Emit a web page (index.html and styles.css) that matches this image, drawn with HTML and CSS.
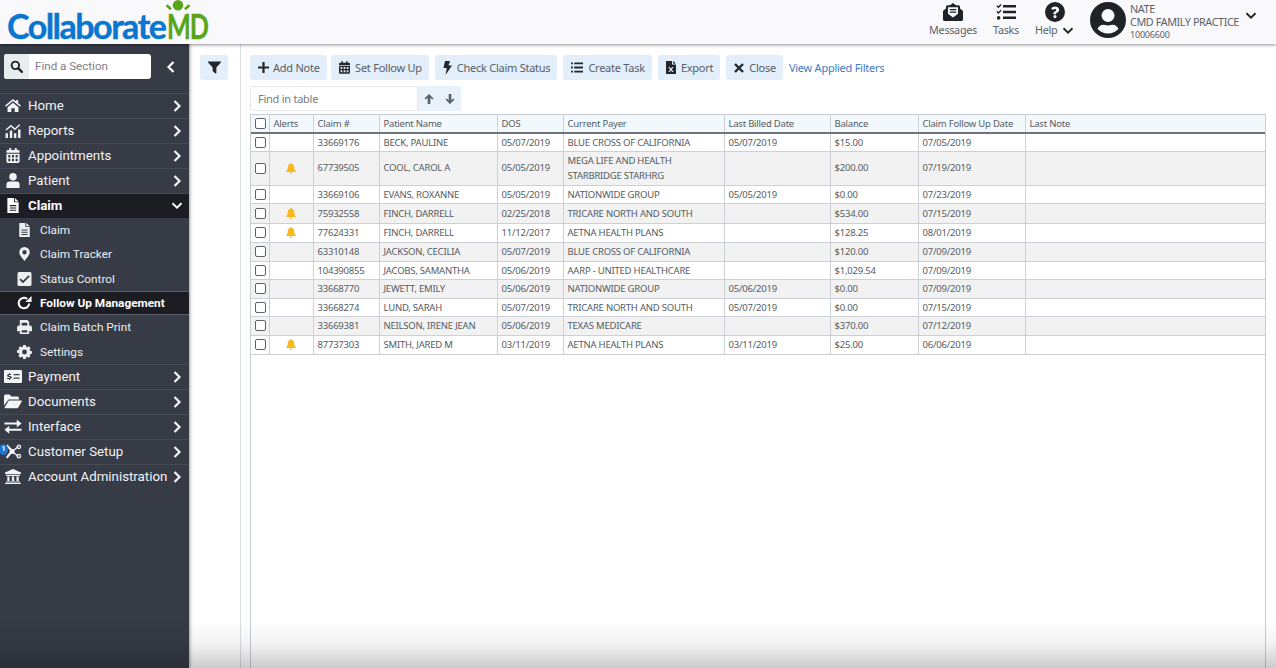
FILE: index.html
```html
<!DOCTYPE html>
<html lang="en">
<head>
<meta charset="utf-8">
<title>CollaborateMD</title>
<link rel="stylesheet" href="styles.css">
</head>
<body>
<svg class="sprite" width="0" height="0" aria-hidden="true">
  <defs>
    <symbol id="i-search" viewBox="0 0 16 16"><circle cx="6.6" cy="6.6" r="4.6" fill="none" stroke="currentColor" stroke-width="2.3"/><path d="M10 10l4.6 4.6" stroke="currentColor" stroke-width="2.8" stroke-linecap="round"/></symbol>
    <symbol id="i-right" viewBox="0 0 12 16"><path d="M3 2l6 6-6 6" fill="none" stroke="currentColor" stroke-width="2.6"/></symbol>
    <symbol id="i-left" viewBox="0 0 12 16"><path d="M9 2L3 8l6 6" fill="none" stroke="currentColor" stroke-width="2.6"/></symbol>
    <symbol id="i-down" viewBox="0 0 16 12"><path d="M2 3l6 6 6-6" fill="none" stroke="currentColor" stroke-width="2.4"/></symbol>
    <symbol id="i-home" viewBox="0 0 18 16"><path d="M9 1L0.5 8l1 1.3L9 3.2l7.5 6.1 1-1.3-3-2.5V2h-2v1.6z"/><path d="M3.2 9.8L9 5l5.8 4.8V15h-4v-4H7.2v4h-4z"/></symbol>
    <symbol id="i-chart" viewBox="0 0 18 16"><path d="M1 11h2.6v5H1zM5.6 8h2.6v8H5.6zM10 11h2.6v5H10zM14.4 7H17v9h-2.6z"/><path d="M1.5 7.5L6.8 2.8l4.2 4 5.2-5" fill="none" stroke="currentColor" stroke-width="1.5"/></symbol>
    <symbol id="i-calendar" viewBox="0 0 14 16"><path d="M3 0h2v2h4V0h2v2h1.5A1.5 1.5 0 0 1 14 3.5V5H0V3.500A1.500 1.500 0 0 1 1.500 2H3z"/><path fill-rule="evenodd" d="M0 6h14v8.500a1.500 1.500 0 0 1-1.500 1.500h-11A1.500 1.500 0 0 1 0 14.500zM2 7.500V10h2.200V7.500zM5.900 7.500V10h2.200V7.500zM9.800 7.500V10H12V7.500zM2 11.500V14h2.200v-2.500zM5.900 11.500V14h2.200v-2.500zM9.800 11.500V14H12v-2.500z"/></symbol>
    <symbol id="i-user" viewBox="0 0 14 16"><circle cx="7" cy="4" r="4"/><path d="M3.500 9h7A3.500 3.500 0 0 1 14 12.500V16H0v-3.500A3.500 3.500 0 0 1 3.500 9z"/></symbol>
    <symbol id="i-file" viewBox="0 0 12 16"><path fill-rule="evenodd" d="M0 0h7v4.500h5V16H0zM2.500 7.500v1.200h7V7.500zM2.500 10v1.200h7V10zM2.500 12.500v1.200h7v-1.200z"/><path d="M8 0l4 3.600H8z"/></symbol>
    <symbol id="i-pin" viewBox="0 0 12 16"><path fill-rule="evenodd" d="M6 0a6 6 0 0 1 6 6c0 3-3.500 7-6 10C3.500 13 0 9 0 6a6 6 0 0 1 6-6zm0 3.500a2.500 2.500 0 1 0 0 5 2.500 2.500 0 0 0 0-5z"/></symbol>
    <symbol id="i-check" viewBox="0 0 14 14"><path fill-rule="evenodd" d="M1.500 0h11A1.500 1.500 0 0 1 14 1.500v11a1.500 1.500 0 0 1-1.500 1.500h-11A1.500 1.500 0 0 1 0 12.500v-11A1.500 1.500 0 0 1 1.500 0zM11 3.200L5.500 8.700 3.200 6.400 1.900 7.700l3.600 3.600 6.800-6.800z"/></symbol>
    <symbol id="i-redo" viewBox="0 0 16 16"><path d="M13 8.500A5.600 5.600 0 1 1 10.800 3.600" fill="none" stroke="currentColor" stroke-width="2.200"/><path d="M15.500 0.500v6.500H9z"/></symbol>
    <symbol id="i-print" viewBox="0 0 16 15"><path fill-rule="evenodd" d="M3 0h8l2 2v4.500h-2V3H5v3.500H3z"/><path fill-rule="evenodd" d="M2 6h12a2 2 0 0 1 2 2v4h-3v3H3v-3H0V8a2 2 0 0 1 2-2zm3 5v2.500h6V11z"/></symbol>
    <symbol id="i-cog" viewBox="0 0 16 16"><path fill-rule="evenodd" d="M6.500 0h3l.4 2.100 1.300.6L13 1.500l2 2.200-1.200 1.700.5 1.300 2.200.4v3l-2.200.4-.5 1.300L15 12.300l-2 2.200-1.800-1.200-1.300.6L9.500 16h-3l-.4-2.100-1.300-.6L3 14.500l-2-2.200 1.200-1.700-.5-1.300L-.5 8.900v-3l2.200-.4.500-1.300L1 3.700l2-2.200 1.800 1.200 1.300-.6zM8 5.200a2.800 2.800 0 1 0 0 5.600 2.800 2.800 0 0 0 0-5.600z"/></symbol>
    <symbol id="i-money" viewBox="0 0 18 13"><path fill-rule="evenodd" d="M1 0h16a1 1 0 0 1 1 1v11a1 1 0 0 1-1 1H1a1 1 0 0 1-1-1V1a1 1 0 0 1 1-1zm8.500 4v1.300h6V4zm0 3.500v1.300h6V7.500zM5 3v1c-2.400.3-2.400 2.700-.3 3l1 .2c.7.200.5.800-.2.800H3v1h2v1h1V9c2.300-.3 2.300-2.600.3-2.900l-1-.2c-.7-.2-.5-.9.200-.9H7V4H6V3z"/></symbol>
    <symbol id="i-folder" viewBox="0 0 18 14"><path d="M0 1.500A1.500 1.500 0 0 1 1.500 0h4l2 2h6A1.500 1.500 0 0 1 15 3.500V5H4.500L0 11z"/><path d="M4.800 6H17.500c.4 0 .6.400.4.700L14.300 13a1.500 1.500 0 0 1-1.200.7H1c-.4 0-.6-.4-.4-.7z"/></symbol>
    <symbol id="i-exchange" viewBox="0 0 16 14"><path d="M0 3.300h11.500V0.500L16 4.300l-4.500 3.600V5.200H0zM16 9H4.500V6.400L0 10l4.500 3.700v-2.800H16z"/></symbol>
    <symbol id="i-setup" viewBox="0 0 20 16"><path d="M3 1l6 6.200L3 15" fill="none" stroke="currentColor" stroke-width="2.400"/><path d="M9 8l7-5.500M9 8l7 5.500" stroke="currentColor" stroke-width="1.500"/><circle cx="9" cy="8" r="2.800"/><circle cx="16.500" cy="2.800" r="1.900" fill="none" stroke="currentColor" stroke-width="1.400"/><circle cx="16.500" cy="13.200" r="1.900" fill="none" stroke="currentColor" stroke-width="1.400"/></symbol>
    <symbol id="i-bank" viewBox="0 0 16 15"><path d="M8 0l8 3.400V5H0V3.400zM1 5.800h14V7H1zM2.300 7.600h2.200v4.400H2.300zM6.900 7.600h2.200v4.400H6.900zM11.500 7.600h2.200v4.400h-2.200zM1 12.500h14v1.100H1zM0 14h16v1H0z"/></symbol>
    <symbol id="i-filter" viewBox="0 0 14 14"><path d="M0.500 0.500h13a.6.600 0 0 1 .4 1L9 7v6a.6.600 0 0 1-1 .4L5.200 11a.6.600 0 0 1-.2-.4V7L0.100 1.500a.6.600 0 0 1 .4-1z"/></symbol>
    <symbol id="i-plus" viewBox="0 0 12 12"><path d="M4.800 0h2.400v4.800H12v2.400H7.200V12H4.800V7.200H0V4.800h4.800z"/></symbol>
    <symbol id="i-bolt" viewBox="0 0 9 14"><path d="M2 0h5L5.500 4.500H9L2.500 14 3.800 7H0.500z"/></symbol>
    <symbol id="i-list" viewBox="0 0 13 11"><path d="M0 0h2v2H0zM3.500 0H13v2H3.500zM0 4.500h2v2H0zM3.500 4.500H13v2H3.500zM0 9h2v2H0zM3.500 9H13v2H3.500z"/></symbol>
    <symbol id="i-excel" viewBox="0 0 10 13"><path fill-rule="evenodd" d="M0 0h6v3.500h4V13H0zM2.300 6l1.800 2.600L2.300 11h1.400l1.200-1.700L6.100 11h1.500L5.800 8.500 7.500 6H6.100L5 7.700 3.800 6z"/><path d="M7 0l3 2.600H7z"/></symbol>
    <symbol id="i-times" viewBox="0 0 10 10"><path d="M1 1l8 8M9 1l-8 8" stroke="currentColor" stroke-width="2.400"/></symbol>
    <symbol id="i-up" viewBox="0 0 10 10"><path d="M5 0l4.500 4.500-1.200 1.100L6.300 3.800V10H3.700V3.800L1.700 5.600.5 4.500z"/></symbol>
    <symbol id="i-dn" viewBox="0 0 10 10"><path d="M5 10L.5 5.500l1.200-1.100 2 1.800V0h2.600v6.200l2-1.800 1.200 1.100z"/></symbol>
    <symbol id="i-bell" viewBox="0 0 10 11"><path d="M5 0a.9.900 0 0 1 .9.900C8 1.300 8.300 3 8.300 5c0 1.700.9 2.600 1.500 3.200.3.400.1.800-.4.800H.6c-.5 0-.7-.4-.4-.8C.8 7.600 1.700 6.700 1.700 5c0-2 .3-3.700 2.400-4.100A.9.900 0 0 1 5 0zM3.700 9.600h2.600a1.300 1.300 0 0 1-2.600 0z"/></symbol>
    <symbol id="i-mail" viewBox="0 0 20 18"><path fill-rule="evenodd" d="M10 0l3 2.300h2.500A1.500 1.500 0 0 1 17 3.800v1.600l2.300 1.800c.4.300.7.800.7 1.300v7.900a1.600 1.600 0 0 1-1.600 1.600H1.600A1.600 1.600 0 0 1 0 16.400V8.500c0-.5.300-1 .7-1.300L3 5.400V3.800a1.500 1.500 0 0 1 1.500-1.500H7zM5 4.300v6.400l5 3.700 5-3.700V4.300zM6.800 6h6.400v1.300H6.800zM6.800 8.500h6.400v1.300H6.800z"/></symbol>
    <symbol id="i-tasks" viewBox="0 0 20 17"><path d="M7 1.500h13V4H7zM7 7.300h13v2.500H7zM7 13.100h13v2.500H7z"/><path d="M.8 2.200l1.600 1.500L5 1M.8 8l1.600 1.500L5 6.800" fill="none" stroke="currentColor" stroke-width="1.400"/><circle cx="2.600" cy="14.400" r="1.800"/></symbol>
    <symbol id="i-help" viewBox="0 0 20 20"><path fill-rule="evenodd" d="M10 0a10 10 0 1 1 0 20 10 10 0 0 1 0-20zM6.200 6.800l2 1.300c.4-.8.900-1.200 1.700-1.200.7 0 1.300.4 1.300 1 0 .6-.5.900-1.200 1.300-.9.500-1.700 1.100-1.700 2.400v.6h2.800v-.3c0-.6.500-.9 1.200-1.300.9-.5 1.900-1.200 1.900-2.800C14.200 5.600 12 4.400 10 4.400c-1.800 0-3 .8-3.800 2.400zM10 13a1.600 1.600 0 1 0 0 3.200 1.600 1.600 0 0 0 0-3.200z"/></symbol>
    <symbol id="i-avatar" viewBox="0 0 36 36"><path fill-rule="evenodd" d="M18 0a18 18 0 1 1 0 36 18 18 0 0 1 0-36zm0 7a6.500 6.500 0 1 0 0 13 6.500 6.500 0 0 0 0-13zM18 31.500c4.200 0 8-1.800 10.500-4.800-1-2.300-3.200-4-5.800-4-.5 0-1 .1-1.500.3-1 .3-2 .5-3.200.5s-2.200-.2-3.200-.5c-.5-.2-1-.3-1.500-.3-2.600 0-4.800 1.700-5.800 4 2.500 3 6.300 4.800 10.500 4.800z"/></symbol>
  </defs>
</svg>

<header class="topbar">
  <div class="logo">
    <span class="logo-blue">Collaborate</span><span class="logo-green">MD</span>
    <svg class="logo-mark" viewBox="0 0 32 16" aria-hidden="true"><circle cx="16" cy="6" r="6"/><path d="M3 6l5 4.500M29 6l-5 4.500" stroke="#58a618" stroke-width="3"/></svg>
  </div>
  <nav class="top-actions">
    <a class="top-item tm"><svg class="ti-mail"><use href="#i-mail"/></svg><span>Messages</span></a>
    <a class="top-item tt"><svg class="ti-tasks"><use href="#i-tasks"/></svg><span>Tasks</span></a>
    <a class="top-item th"><svg class="ti-help"><use href="#i-help"/></svg><span class="help-label">Help<svg class="ti-chev"><use href="#i-down"/></svg></span></a>
    <div class="account">
      <svg class="avatar"><use href="#i-avatar"/></svg>
      <div class="account-text">
        <div>NATE</div>
        <div>CMD FAMILY PRACTICE</div>
        <div class="acct-id">10006600</div>
      </div>
      <svg class="acct-chev"><use href="#i-down"/></svg>
    </div>
  </nav>
</header>

<div class="shell">
  <aside class="sidebar">
    <div class="side-search">
      <div class="search-box">
        <span class="search-addon"><svg><use href="#i-search"/></svg></span>
        <span class="search-ph">Find a Section</span>
      </div>
      <svg class="collapse"><use href="#i-left"/></svg>
    </div>
    <ul class="menu">
      <li class="mi"><svg class="mi-ic"><use href="#i-home"/></svg><span>Home</span><svg class="mi-ch"><use href="#i-right"/></svg></li>
      <li class="mi"><svg class="mi-ic"><use href="#i-chart"/></svg><span>Reports</span><svg class="mi-ch"><use href="#i-right"/></svg></li>
      <li class="mi"><svg class="mi-ic"><use href="#i-calendar"/></svg><span>Appointments</span><svg class="mi-ch"><use href="#i-right"/></svg></li>
      <li class="mi"><svg class="mi-ic"><use href="#i-user"/></svg><span>Patient</span><svg class="mi-ch"><use href="#i-right"/></svg></li>
      <li class="mi mi-open"><svg class="mi-ic"><use href="#i-file"/></svg><span>Claim</span><svg class="mi-ch-d"><use href="#i-down"/></svg></li>
      <li class="si"><svg class="si-ic"><use href="#i-file"/></svg><span>Claim</span></li>
      <li class="si"><svg class="si-ic"><use href="#i-pin"/></svg><span>Claim Tracker</span></li>
      <li class="si"><svg class="si-ic"><use href="#i-check"/></svg><span>Status Control</span></li>
      <li class="si si-on"><svg class="si-ic si-redo"><use href="#i-redo"/></svg><span>Follow Up Management</span></li>
      <li class="si"><svg class="si-ic"><use href="#i-print"/></svg><span>Claim Batch Print</span></li>
      <li class="si si-last"><svg class="si-ic"><use href="#i-cog"/></svg><span>Settings</span></li>
      <li class="mi"><svg class="mi-ic"><use href="#i-money"/></svg><span>Payment</span><svg class="mi-ch"><use href="#i-right"/></svg></li>
      <li class="mi"><svg class="mi-ic"><use href="#i-folder"/></svg><span>Documents</span><svg class="mi-ch"><use href="#i-right"/></svg></li>
      <li class="mi"><svg class="mi-ic"><use href="#i-exchange"/></svg><span>Interface</span><svg class="mi-ch"><use href="#i-right"/></svg></li>
      <li class="mi"><svg class="mi-ic"><use href="#i-setup"/></svg><b class="badge">1</b><span>Customer Setup</span><svg class="mi-ch"><use href="#i-right"/></svg></li>
      <li class="mi"><svg class="mi-ic"><use href="#i-bank"/></svg><span>Account Administration</span><svg class="mi-ch"><use href="#i-right"/></svg></li>
    </ul>
  </aside>

  <div class="filter-pane">
    <button class="btn btn-filter"><svg><use href="#i-filter"/></svg></button>
  </div>

  <main class="content">
    <div class="toolbar">
      <button class="btn"><svg class="b-plus"><use href="#i-plus"/></svg>Add Note</button>
      <button class="btn"><svg class="b-cal"><use href="#i-calendar"/></svg>Set Follow Up</button>
      <button class="btn"><svg class="b-bolt"><use href="#i-bolt"/></svg>Check Claim Status</button>
      <button class="btn"><svg class="b-list"><use href="#i-list"/></svg>Create Task</button>
      <button class="btn"><svg class="b-xl"><use href="#i-excel"/></svg>Export</button>
      <button class="btn"><svg class="b-x"><use href="#i-times"/></svg>Close</button>
      <a class="link">View Applied Filters</a>
    </div>
    <div class="find">
      <span class="find-input">Find in table</span>
      <span class="find-nav"><svg><use href="#i-up"/></svg><svg><use href="#i-dn"/></svg></span>
    </div>
    <div class="table-wrap">
      <table class="grid">
        <colgroup>
          <col class="c1"><col class="c2"><col class="c3"><col class="c4"><col class="c5"><col class="c6"><col class="c7"><col class="c8"><col class="c9"><col>
        </colgroup>
        <thead>
          <tr><th class="ck"><i class="box"></i></th><th>Alerts</th><th>Claim #</th><th>Patient Name</th><th>DOS</th><th>Current Payer</th><th>Last Billed Date</th><th>Balance</th><th>Claim Follow Up Date</th><th>Last Note</th></tr>
        </thead>
        <tbody>
          <tr><td class="ck"><i class="box"></i></td><td></td><td>33669176</td><td>BECK, PAULINE</td><td>05/07/2019</td><td>BLUE CROSS OF CALIFORNIA</td><td>05/07/2019</td><td>$15.00</td><td>07/05/2019</td><td></td></tr>
          <tr class="odd tall"><td class="ck"><i class="box"></i></td><td class="al"><svg class="bell"><use href="#i-bell"/></svg></td><td>67739505</td><td>COOL, CAROL A</td><td>05/05/2019</td><td>MEGA LIFE AND HEALTH<br>STARBRIDGE STARHRG</td><td></td><td>$200.00</td><td>07/19/2019</td><td></td></tr>
          <tr><td class="ck"><i class="box"></i></td><td></td><td>33669106</td><td>EVANS, ROXANNE</td><td>05/05/2019</td><td>NATIONWIDE GROUP</td><td>05/05/2019</td><td>$0.00</td><td>07/23/2019</td><td></td></tr>
          <tr class="odd bl"><td class="ck"><i class="box"></i></td><td class="al"><svg class="bell"><use href="#i-bell"/></svg></td><td>75932558</td><td>FINCH, DARRELL</td><td>02/25/2018</td><td>TRICARE NORTH AND SOUTH</td><td></td><td>$534.00</td><td>07/15/2019</td><td></td></tr>
          <tr class="bl"><td class="ck"><i class="box"></i></td><td class="al"><svg class="bell"><use href="#i-bell"/></svg></td><td>77624331</td><td>FINCH, DARRELL</td><td>11/12/2017</td><td>AETNA HEALTH PLANS</td><td></td><td>$128.25</td><td>08/01/2019</td><td></td></tr>
          <tr class="odd"><td class="ck"><i class="box"></i></td><td></td><td>63310148</td><td>JACKSON, CECILIA</td><td>05/07/2019</td><td>BLUE CROSS OF CALIFORNIA</td><td></td><td>$120.00</td><td>07/09/2019</td><td></td></tr>
          <tr><td class="ck"><i class="box"></i></td><td></td><td>104390855</td><td>JACOBS, SAMANTHA</td><td>05/06/2019</td><td>AARP - UNITED HEALTHCARE</td><td></td><td>$1,029.54</td><td>07/09/2019</td><td></td></tr>
          <tr class="odd"><td class="ck"><i class="box"></i></td><td></td><td>33668770</td><td>JEWETT, EMILY</td><td>05/06/2019</td><td>NATIONWIDE GROUP</td><td>05/06/2019</td><td>$0.00</td><td>07/09/2019</td><td></td></tr>
          <tr><td class="ck"><i class="box"></i></td><td></td><td>33668274</td><td>LUND, SARAH</td><td>05/07/2019</td><td>TRICARE NORTH AND SOUTH</td><td>05/07/2019</td><td>$0.00</td><td>07/15/2019</td><td></td></tr>
          <tr class="odd"><td class="ck"><i class="box"></i></td><td></td><td>33669381</td><td>NEILSON, IRENE JEAN</td><td>05/06/2019</td><td>TEXAS MEDICARE</td><td></td><td>$370.00</td><td>07/12/2019</td><td></td></tr>
          <tr class="bl"><td class="ck"><i class="box"></i></td><td class="al"><svg class="bell"><use href="#i-bell"/></svg></td><td>87737303</td><td>SMITH, JARED M</td><td>03/11/2019</td><td>AETNA HEALTH PLANS</td><td>03/11/2019</td><td>$25.00</td><td>06/06/2019</td><td></td></tr>
        </tbody>
      </table>
    </div>
  </main>
</div>
<div class="fade"></div>
</body>
</html>
```

FILE: styles.css
```css
* { box-sizing: border-box; }
html, body { height: 100%; }
body {
  margin: 0;
  overflow: hidden;
  display: flex;
  flex-direction: column;
  background: #fff;
  color: #555b63;
  font-family: "Noto Sans", sans-serif;
}
svg { fill: currentColor; }
.sprite { position: absolute; }
ul { list-style: none; margin: 0; padding: 0; }

/* top bar */
.topbar {
  height: 44px;
  flex: none;
  position: relative;
  z-index: 2;
  display: flex;
  justify-content: space-between;
  background: #f9f9fc;
  box-shadow: 0 1px 3px rgba(0, 0, 0, .45);
}
.logo {
  position: relative;
  padding: 7px 0 0 7px;
  font-family: Lato, sans-serif;
  font-weight: 700;
  font-size: 34px;
  line-height: 38px;
  letter-spacing: -1.5px;
  white-space: nowrap;
  -webkit-text-stroke: .4px;
}
.logo-blue { color: #0b76cf; }
.logo-green {
  display: inline-block;
  margin-left: 2px;
  color: #58a618;
  transform: scaleX(.74);
  transform-origin: left center;
}
.logo-mark {
  position: absolute;
  left: 162px;
  top: 0;
  width: 32px;
  height: 14px;
  fill: #58a618;
}
.top-actions { display: flex; color: #22262b; }
.top-item {
  position: absolute;
  top: 2px;
  display: flex;
  flex-direction: column;
  align-items: center;
  font-size: 10.8px;
  letter-spacing: -.3px;
  line-height: 16px;
  color: #5c6168;
}
.top-item svg { color: #1f2226; fill: #1f2226; }
.tm { left: 929px; width: 48px; }
.tt { left: 990px; width: 32px; }
.th { left: 1035px; width: 42px; align-items: flex-start; }
.ti-mail { width: 20px; height: 18px; margin-top: 1px; margin-bottom: 1px; }
.ti-tasks { width: 20px; height: 18px; margin-top: 1px; margin-bottom: 1px; }
.ti-help { width: 20px; height: 20px; margin-left: 10px; }
.help-label { display: flex; align-items: center; }
.ti-chev { width: 12px; height: 9px; margin-left: 5px; }
.account {
  position: absolute;
  left: 1090px;
  top: 2px;
  display: flex;
  align-items: flex-start;
}
.avatar { width: 36px; height: 36px; margin-right: 4px; fill: #1f2226; }
.account-text { font-size: 10.8px; letter-spacing: -.4px; line-height: 13px; color: #5c6168; white-space: nowrap; }
.acct-id { font-size: 9px; letter-spacing: -.2px; line-height: 13px; }
.acct-chev { width: 12px; height: 9px; margin: 9px 0 0 6px; fill: #1f2226; color: #1f2226; }

/* shell */
.shell { flex: 1; display: flex; min-height: 0; }
.sidebar {
  width: 189px;
  flex: none;
  background: #373b46;
  color: #f2f3f5;
  font-family: Roboto, sans-serif;
  box-shadow: 1px 0 3px rgba(0, 0, 0, .4);
  z-index: 1;
  padding-top: 10px;
}
.side-search { display: flex; align-items: center; padding-left: 4px; height: 25px; margin-bottom: 13.600px; }
.search-box {
  width: 147px;
  height: 25px;
  display: flex;
  background: #fff;
  border-radius: 3px;
  overflow: hidden;
}
.search-addon {
  width: 25px;
  display: flex;
  align-items: center;
  justify-content: center;
  background: #e9ecef;
  color: #1f2226;
}
.search-addon svg { width: 13px; height: 13px; }
.search-ph { padding-left: 6px; font-size: 11.600px; line-height: 25px; color: #7b8087; }
.collapse { width: 10px; height: 14px; margin-left: 15px; color: #fff; }

.mi {
  position: relative;
  display: flex;
  align-items: center;
  height: 25px;
  padding: 0 6px 0 4px;
  border-top: 1px solid #474b55;
  font-size: 13.3px;
}
.mi span { flex: 1; padding-left: 6px; white-space: nowrap; }
.mi-ic { width: 18px; height: 15px; flex: none; }
.mi-ch { width: 10px; height: 14px; flex: none; margin-right: 1px; }
.mi-ch-d { width: 12px; height: 9px; flex: none; }
.mi-open { background: #1c1d22; font-weight: 700; color: #fff; }
.si {
  display: flex;
  align-items: center;
  height: 24.4px;
  padding-left: 17px;
  font-size: 11.8px;
  color: #eceef0;
}
.si span { padding-left: 8px; white-space: nowrap; }
.si-ic { width: 15px; height: 14px; flex: none; }
.si-redo { height: 16px; }
.si-last { height: 24px; }
.si-on { background: #1c1d22; font-weight: 700; color: #fff; border-top: 1px solid #5a5e68; border-bottom: 1px solid #5a5e68; }
.badge {
  position: absolute;
  left: -1px;
  top: 4px;
  width: 9px;
  height: 11px;
  border-radius: 50%;
  background: #1378d3;
  color: #fff;
  font-size: 7px;
  line-height: 11px;
  text-align: center;
}

/* filter pane */
.filter-pane {
  width: 52px;
  flex: none;
  padding: 11px 0 0 11px;
  border-right: 1px solid #dcdde0;
}
.btn {
  display: inline-flex;
  align-items: center;
  height: 25px;
  padding: 0 7px 0 8px;
  border: 0;
  border-radius: 3px;
  background: #e2eefa;
  color: #5a5f66;
  font: 11px "Noto Sans", sans-serif;
  letter-spacing: -.25px;
  white-space: nowrap;
}
.btn svg { fill: #23272c; color: #23272c; margin-right: 5px; flex: none; }
.btn-filter { width: 28px; justify-content: center; padding: 0; }
.btn-filter svg { width: 13px; height: 13px; margin: 0; }
.btn .b-plus { width: 11px; height: 11px; margin-right: 4px; }
.b-cal { width: 11px; height: 13px; }
.b-bolt { width: 9px; height: 14px; }
.b-list { width: 12px; height: 11px; }
.b-xl { width: 10px; height: 13px; }
.b-x { width: 10px; height: 10px; }

/* content */
.content {
  flex: 1;
  min-width: 0;
  display: flex;
  flex-direction: column;
  padding: 11px 10px 0 9px;
}
.toolbar { display: flex; align-items: center; gap: 6px; height: 25px; flex: none; }
.toolbar .btn:first-child { margin-right: -1.5px; }
.link { color: #3f7cc0; font-size: 11px; letter-spacing: -.25px; white-space: nowrap; }
.find { display: flex; height: 25px; flex: none; margin-top: 6px; margin-bottom: 3px; }
.find-input {
  width: 168px;
  padding-left: 7px;
  border: 1px solid #e6e8eb;
  border-radius: 3px 0 0 3px;
  font-size: 11px;
  letter-spacing: -.25px;
  line-height: 23px;
  color: #777c83;
}
.find-nav {
  width: 43px;
  display: flex;
  align-items: center;
  justify-content: space-around;
  background: #e9f1fa;
  color: #5a5f66;
}
.find-nav svg { width: 10px; height: 10px; }
.table-wrap {
  flex: 1;
  min-height: 0;
  border-left: 1px solid #c8ccd3;
  border-right: 1px solid #c8ccd3;
  overflow: hidden;
}
.grid {
  width: 100%;
  table-layout: fixed;
  border-collapse: collapse;
  font-size: 9.5px;
  letter-spacing: -.22px;
}
.c1 { width: 18px; }
.c2 { width: 44px; }
.c3 { width: 66px; }
.c4 { width: 118px; }
.c5 { width: 66px; }
.c6 { width: 161px; }
.c7 { width: 106px; }
.c8 { width: 88px; }
.c9 { width: 107px; }
.grid th, .grid td {
  padding: 0 3px 0 4px;
  border: 1px solid #cdd0d6;
  white-space: nowrap;
  overflow: hidden;
  font-weight: 400;
  text-align: left;
}
.grid tr > :first-child { border-left: 0; }
.grid tr > :last-child { border-right: 0; }
.grid th {
  height: 18px;
  background: #f3f8fd;
  border-top: 1px solid #c8ccd3;
  border-bottom: 2px solid #6f747c;
}
.grid td { height: 18.5px; }
.grid .ck { padding: 0; text-align: center; }
.grid .al { text-align: center; padding: 0; }
.grid tr.tall td { height: 34px; line-height: 15.500px; }
.grid tr.bl td { height: 19.600px; }
.odd td { background: #f2f2f2; }
.box {
  display: block;
  width: 11px;
  height: 11px;
  margin-left: 4px;
  border: 1.300px solid #5d6268;
  border-radius: 2px;
  background: #fff;
}
.bell { display: block; width: 10px; height: 11px; margin: 0 auto; fill: #f9b81e; color: #f9b81e; }

/* fade at the bottom of the window */
.fade {
  position: fixed;
  left: 0;
  right: 0;
  bottom: 0;
  height: 48px;
  z-index: 3;
  pointer-events: none;
  background: linear-gradient(to bottom, rgba(0, 0, 0, 0), rgba(0, 0, 0, .05) 50%, rgba(0, 0, 0, .2));
}
```
